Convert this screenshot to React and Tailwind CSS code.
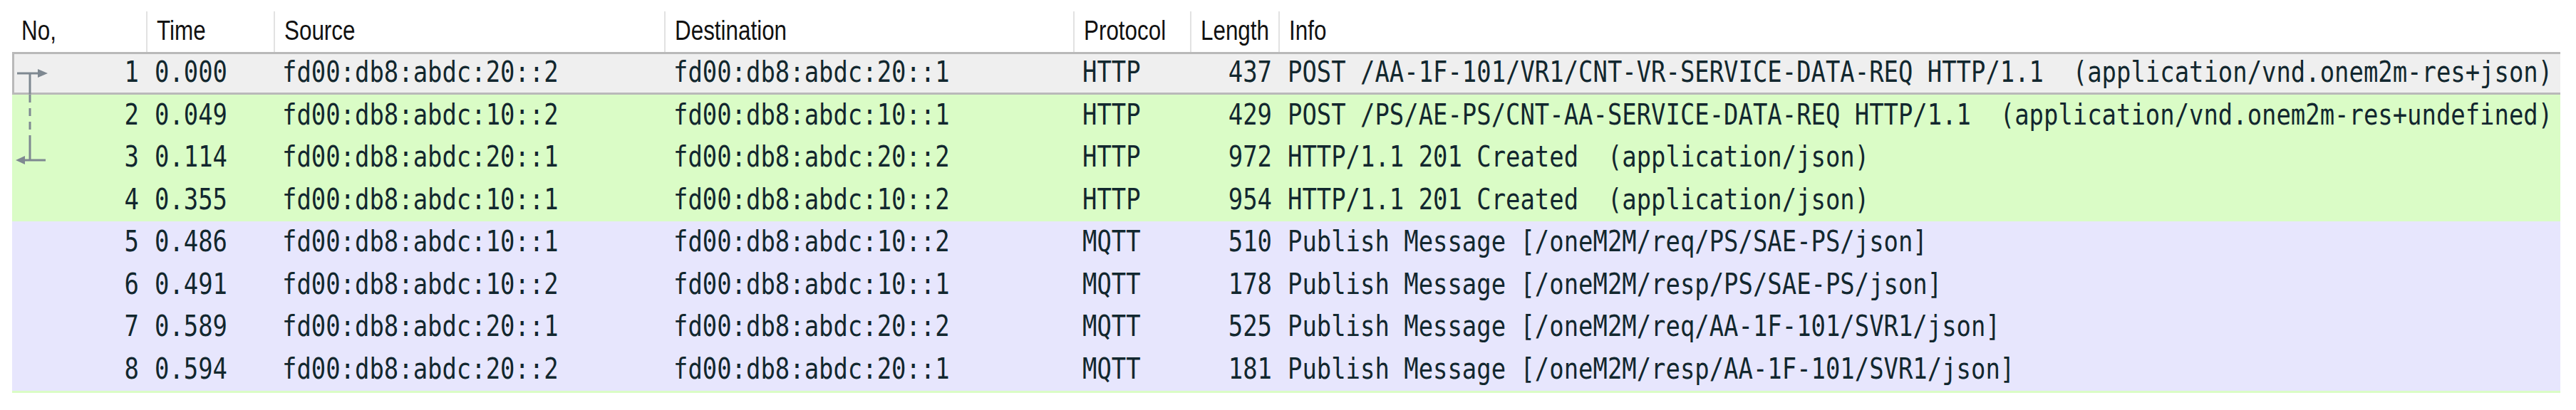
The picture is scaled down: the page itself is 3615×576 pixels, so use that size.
const GRID = 'grid grid-cols-[190px_179px_548px_574px_164px_124px_1fr]';

const HEADERS = ['No.', 'Time', 'Source', 'Destination', 'Protocol', 'Length', 'Info'];

const PACKETS = [
  { no: 1, time: '0.000', src: 'fd00:db8:abdc:20::2', dst: 'fd00:db8:abdc:20::1', proto: 'HTTP', len: 437, info: 'POST /AA-1F-101/VR1/CNT-VR-SERVICE-DATA-REQ HTTP/1.1  (application/vnd.onem2m-res+json)', kind: 'sel', rel: 'start' },
  { no: 2, time: '0.049', src: 'fd00:db8:abdc:10::2', dst: 'fd00:db8:abdc:10::1', proto: 'HTTP', len: 429, info: 'POST /PS/AE-PS/CNT-AA-SERVICE-DATA-REQ HTTP/1.1  (application/vnd.onem2m-res+undefined)', kind: 'http', rel: 'mid' },
  { no: 3, time: '0.114', src: 'fd00:db8:abdc:20::1', dst: 'fd00:db8:abdc:20::2', proto: 'HTTP', len: 972, info: 'HTTP/1.1 201 Created  (application/json)', kind: 'http', rel: 'end' },
  { no: 4, time: '0.355', src: 'fd00:db8:abdc:10::1', dst: 'fd00:db8:abdc:10::2', proto: 'HTTP', len: 954, info: 'HTTP/1.1 201 Created  (application/json)', kind: 'http' },
  { no: 5, time: '0.486', src: 'fd00:db8:abdc:10::1', dst: 'fd00:db8:abdc:10::2', proto: 'MQTT', len: 510, info: 'Publish Message [/oneM2M/req/PS/SAE-PS/json]', kind: 'mqtt' },
  { no: 6, time: '0.491', src: 'fd00:db8:abdc:10::2', dst: 'fd00:db8:abdc:10::1', proto: 'MQTT', len: 178, info: 'Publish Message [/oneM2M/resp/PS/SAE-PS/json]', kind: 'mqtt' },
  { no: 7, time: '0.589', src: 'fd00:db8:abdc:20::1', dst: 'fd00:db8:abdc:20::2', proto: 'MQTT', len: 525, info: 'Publish Message [/oneM2M/req/AA-1F-101/SVR1/json]', kind: 'mqtt' },
  { no: 8, time: '0.594', src: 'fd00:db8:abdc:20::2', dst: 'fd00:db8:abdc:20::1', proto: 'MQTT', len: 181, info: 'Publish Message [/oneM2M/resp/AA-1F-101/SVR1/json]', kind: 'mqtt' },
];

const ROW_BG = {
  sel: 'bg-[#efefef] shadow-[inset_3px_0_0_#b9b9b9,inset_0_3px_0_#b9b9b9,inset_0_-3px_0_#b9b9b9]',
  http: 'bg-[#dafcc6]',
  mqtt: 'bg-[#e7e6fd]',
};

// related-packet marker drawn in the No. column
function RelMark({ rel }) {
  if (!rel) return <span className="w-[56px] shrink-0" />;
  return (
    <svg className="w-[56px] h-full shrink-0" viewBox="0 0 56 59.5" preserveAspectRatio="none">
      <g stroke="#7e8891" strokeWidth="3" fill="#7e8891">
        {rel === 'start' && (
          <>
            <line x1="7" y1="30" x2="38" y2="30" />
            <polygon points="36,24 50,30 36,36" stroke="none" />
            <line x1="25" y1="30" x2="25" y2="59.5" />
          </>
        )}
        {rel === 'mid' && <line x1="25" y1="0" x2="25" y2="59.5" strokeDasharray="11 8" />}
        {rel === 'end' && (
          <>
            <line x1="25" y1="0" x2="25" y2="34" />
            <line x1="14" y1="33" x2="47" y2="33" />
            <polygon points="18,27 5,33 18,39" stroke="none" />
          </>
        )}
      </g>
    </svg>
  );
}

function Txt({ children, className = '' }) {
  return (
    <span className={`inline-block scale-y-[1.2] whitespace-pre ${className}`}>{children}</span>
  );
}

export default function App() {
  return (
    <div className="w-[3615px] h-[576px] bg-white pl-[17px] pr-[22px] pt-[16px] overflow-hidden">
      {/* column header */}
      <div className={`${GRID} h-[57px] font-['Liberation_Sans',Arial,sans-serif] text-[31.4px] text-[#111]`}>
        {HEADERS.map((h, i) => (
          <div
            key={h}
            className={`flex items-center pl-[13px] pb-[4px] ${i < HEADERS.length - 1 ? 'border-r-2 border-[#e2e2e2]' : ''}`}
          >
            <Txt className="scale-y-[1.25]">{h === 'No.' ? 'No,' : h}</Txt>
          </div>
        ))}
      </div>

      {/* packet rows */}
      <div className="font-['DejaVu_Sans_Mono',monospace] text-[33.9px] text-[#12272e]">
        {PACKETS.map((p) => (
          <div key={p.no} className={`${GRID} h-[59.5px] ${ROW_BG[p.kind]}`}>
            <div className="flex items-stretch pr-[12px]">
              <RelMark rel={p.rel} />
              <div className="flex-1 flex items-center justify-end">
                <Txt>{p.no}</Txt>
              </div>
            </div>
            <div className="flex items-center pl-[10px]"><Txt>{p.time}</Txt></div>
            <div className="flex items-center pl-[10px]"><Txt>{p.src}</Txt></div>
            <div className="flex items-center pl-[11px]"><Txt>{p.dst}</Txt></div>
            <div className="flex items-center pl-[11px]"><Txt>{p.proto}</Txt></div>
            <div className="flex items-center justify-end pr-[11px]"><Txt>{p.len}</Txt></div>
            <div className="flex items-center pl-[11px]"><Txt>{p.info}</Txt></div>
          </div>
        ))}
        <div className="h-[3px] bg-[#dafcc6]" />
      </div>
    </div>
  );
}
